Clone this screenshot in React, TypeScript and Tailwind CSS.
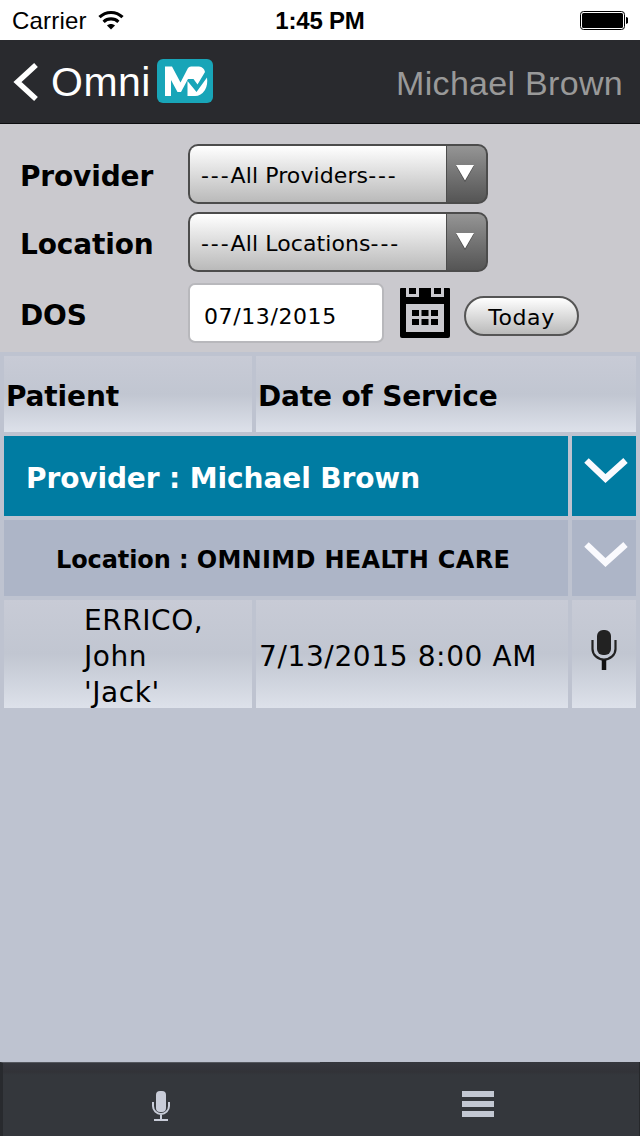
import type { ReactNode } from "react";

function StatusBar() {
  return (
    <div className="grid h-10 grid-cols-3 items-center bg-white px-3 font-['Liberation_Sans',sans-serif] text-black">
      <div className="flex items-center gap-[11px] text-[24px]">
        <span className="pt-0.5 tracking-[0.2px]">Carrier</span>
        <svg width="26" height="20" viewBox="0 0 26 20">
          <path d="M1.5 7.2C8 .9 18 .9 24.500 7.200" fill="none" stroke="#000" strokeWidth="3.200" />
          <path d="M5.600 11.800C9.700 8 16.300 8 20.400 11.800" fill="none" stroke="#000" strokeWidth="3.200" />
          <path d="M9 15.500C11.300 13.500 14.700 13.500 17 15.500L13 19.500Z" fill="#000" />
        </svg>
      </div>
      <div className="pt-0.5 text-center text-[24px] font-bold tracking-[-0.2px]">1:45 PM</div>
      <svg className="justify-self-end" width="48" height="20" viewBox="0 0 48 20">
        <rect x="0.500" y="1.500" width="44" height="18" rx="3" fill="none" stroke="#000" />
        <rect x="2" y="3" width="41" height="15" rx="1.500" />
        <path d="M46 7C50 7.500 50 13.500 46 14Z" />
      </svg>
    </div>
  );
}

function Header() {
  return (
    <header className="flex h-[84px] items-center justify-between border-b border-[#0c0d0f] bg-[#292a2e] pl-3 pr-[17px] font-['Liberation_Sans',sans-serif]">
      <div className="flex items-center">
        <svg width="28" height="40" viewBox="0 0 28 40">
          <path d="M24 3L5.500 20L24 37" fill="none" stroke="#fff" strokeWidth="5.500" />
        </svg>
        <span className="ml-[11px] text-[41px] leading-[46px] tracking-[0.5px] text-white">Omni</span>
        <svg className="ml-[6px] -mt-px" width="56" height="44" viewBox="0 0 56 44">
          <rect width="56" height="44" rx="6" fill="#18a5b8" />
          <path d="M8 37V7.500H15L23.500 23.500L31 9Q32 7.500 34 7.500H42Q47 8 48 13L40.500 25.500L36.500 20H31L24 33H20.500L14 21V37Z" fill="#fff" />
          <path d="M30.500 22L39.500 33L50 18.500Q51 26 48 31Q44 37 38 37H30.500Z" fill="#fff" />
        </svg>
      </div>
      <span className="pt-1 text-[34px] tracking-[0.3px] text-[#999]">Michael Brown</span>
    </header>
  );
}

function Select({ children }: { children: ReactNode }) {
  return (
    <div className="flex h-[60px] w-[300px] overflow-hidden rounded-[10px] border-2 border-[#4c4c4c] bg-[#4c4c4c]">
      <div className="flex flex-1 items-center bg-linear-to-b from-white to-[#bababa] pl-[11px] pt-0.5 text-[22px] tracking-[0.1px]">
        <span className="tracking-[1.900px]">---</span>
        {children}
        <span className="tracking-[1.900px]">---</span>
      </div>
      <div className="ml-px flex w-[39px] justify-center bg-linear-to-b from-[#959595] to-[#555] pt-[18px]">
        <svg className="-ml-[3px]" width="20" height="18" viewBox="0 0 20 18">
          <path d="M1 2H19L10 18Z" fill="#444" />
          <path d="M1 1H19L10 16.500Z" fill="#fff" />
        </svg>
      </div>
    </div>
  );
}

function Chevron() {
  return (
    <svg className="ml-3 mt-5" width="44" height="30" viewBox="0 0 44 30">
      <path d="M2.500 4.500L21.500 22.500L41.500 4.500" fill="none" stroke="#fafafe" strokeWidth="6.500" />
    </svg>
  );
}

const cell = "bg-linear-to-b from-[#c8cbd6] via-[#c1c6d1] to-[#dde1ea]";

export default function App() {
  return (
    <div className="flex h-[1136px] w-[640px] flex-col overflow-hidden bg-[#bec3d0] font-['DejaVu_Sans',sans-serif] text-black">
      <StatusBar />
      <Header />
      <section className="h-[228px] bg-[#cac9ce] pl-5 pt-5 text-[28px] font-bold tracking-[-0.150px]">
        <div className="mb-2 flex items-center">
          <span className="w-[168px] pt-1.5">Provider</span>
          <div className="font-normal"><Select>All Providers</Select></div>
        </div>
        <div className="mb-2.5 flex items-center">
          <span className="w-[168px] pt-1.5">Location</span>
          <div className="font-normal"><Select>All Locations</Select></div>
        </div>
        <div className="flex h-[61px] items-center">
          <span className="w-[168px] pt-[7px]">DOS</span>
          <div className="flex h-[60px] w-[196px] items-center rounded-[7px] border-2 border-[#b8b8bc] bg-white pl-3.5 pt-2 text-[22px] font-normal tracking-[0.600px]">07/13/2015</div>
          <svg className="ml-4" width="50" height="50" viewBox="0 0 50 50">
            <path d="M0 1Q0 0 1 0H49Q50 0 50 1V48Q50 50 48 50H2Q0 50 0 48Z" />
            <path d="M6 0H9V6H16V0H19V9H6ZM31 0H34V6H41V0H44V9H31ZM6 16H44V44H6Z" fill="#cac9ce" />
            <path d="M12 22h7v6h-7ZM21.500 22h7v6h-7ZM31 22h7v6h-7ZM12 31h7v6h-7ZM21.500 31h7v6h-7ZM31 31h7v6h-7Z" />
          </svg>
          <button className="ml-3.5 mt-1.5 h-10 w-[115px] rounded-full border-2 border-[#555] bg-linear-to-b from-white to-[#bababa] pt-[3px] text-[22px] font-normal tracking-[0.600px]">Today</button>
        </div>
      </section>
      <main className="grid grid-cols-[248px_312px_64px] grid-rows-[76px_80px_76px_108px] gap-1 p-1 text-[28px]">
        <div className={`flex items-center pl-0.5 pt-1.5 font-bold tracking-[-0.150px] ${cell}`}>Patient</div>
        <div className={`col-span-2 flex items-center pl-0.5 pt-1.5 font-bold tracking-[-0.150px] ${cell}`}>Date of Service</div>
        <div className="col-span-2 flex items-center bg-[#007ca2] pl-[22px] pt-1.5 font-bold tracking-[-0.100px] text-white">Provider : Michael Brown</div>
        <div className="bg-[#007ca2]"><Chevron /></div>
        <div className="col-span-2 flex items-center bg-[#adb5c7] pl-[52px] pt-1 text-[24px] font-bold tracking-[0.200px]">
          <span className="tracking-[-0.100px]">Location :&nbsp;</span>
          <span className="tracking-[0.320px]">OMNIMD HEALTH CARE</span>
        </div>
        <div className="bg-[#adb5c7]"><Chevron /></div>
        <div className={`pl-20 pt-[3px] leading-9 tracking-[0.550px] ${cell}`}>ERRICO,<br />John<br />'Jack'</div>
        <div className={`flex items-center pl-[3px] pt-1.5 tracking-[0.620px] ${cell}`}>7/13/2015 8:00 AM</div>
        <div className={`flex justify-center pt-[30px] ${cell}`}>
          <svg width="28" height="40" viewBox="0 0 28 40">
            <rect x="7" width="14" height="25" rx="6" fill="#222" />
            <path d="M2.500 10v9a11.500 10.500 0 0 0 23 0v-9" fill="none" stroke="#222" strokeWidth="2.200" />
            <path d="M14 30v10" stroke="#111" strokeWidth="4.500" />
          </svg>
        </div>
      </main>
      <footer className="mt-auto grid h-[74px] grid-cols-2 bg-[linear-gradient(#36383e,#323338_10px,#34373c_13px)]">
        <div className="flex justify-center border-l-[3px] border-t border-l-[#282a2e] border-t-[#55585f] pt-7">
          <svg className="-ml-0.5" width="20" height="31" viewBox="0 0 20 31">
            <rect x="5" width="10" height="21" rx="4" fill="#c8ccd8" />
            <path d="M2 11v4a8 8 0 0 0 16 0v-4M10 23v6M3 29h14" fill="none" stroke="#c8ccd8" strokeWidth="2" />
          </svg>
        </div>
        <div className="flex flex-col gap-1 border-r border-[#26282b] pl-[142px] pt-[29px]">
          <div className="h-1.5 w-8 bg-[#c3c8d3]" />
          <div className="h-1.5 w-8 bg-[#c3c8d3]" />
          <div className="h-1.5 w-8 bg-[#c3c8d3]" />
        </div>
      </footer>
    </div>
  );
}
